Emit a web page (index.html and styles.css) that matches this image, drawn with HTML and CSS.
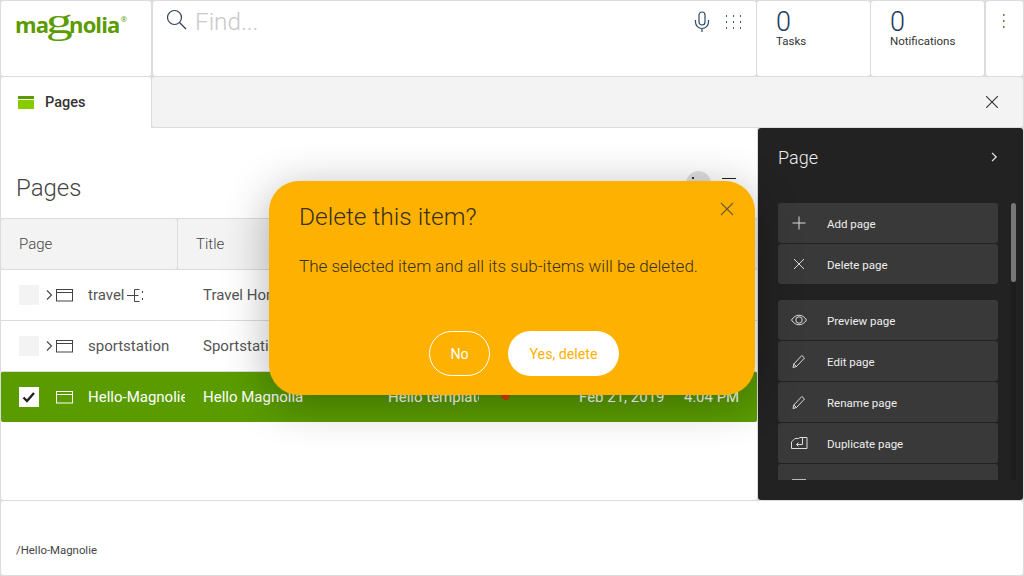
FILE: index.html
```html
<!DOCTYPE html>
<html lang="en">
<head>
  <meta charset="UTF-8">
  <title>Magnolia - Pages</title>
  <link rel="stylesheet" href="styles.css">
</head>
<body>

  <header class="topbar">
    <div class="card logo-card">
      <span class="logo">ma<span class="logo-g">g</span>nolia<sup class="logo-reg">®</sup></span>
    </div>
    <div class="card search-card">
      <svg class="search-icon" width="22" height="22" viewBox="0 0 22 22" fill="none" stroke="#2f4057" stroke-width="1.2"><circle cx="8.5" cy="8.5" r="7"/><path d="M13.5 13.5l6.5 6.5"/></svg>
      <span class="search-text">Find...</span>
      <svg class="mic-icon" width="16" height="22" viewBox="0 0 16 22" fill="none" stroke="#2f4a63" stroke-width="1.2"><rect x="5" y="1" width="6" height="13" rx="3"/><path d="M1.5 9v2a6.500 6.500 0 0 0 13 0V9M8 17.500V21"/></svg>
      <svg class="apps-icon" width="18" height="16" viewBox="0 0 18 16" fill="#46586c"><rect x="1" y="1" width="1" height="2"/><rect x="8" y="1" width="1" height="2"/><rect x="15" y="1" width="1" height="2"/><rect x="1" y="7" width="1" height="2"/><rect x="8" y="7" width="1" height="2"/><rect x="15" y="7" width="1" height="2"/><rect x="1" y="13" width="1" height="2"/><rect x="8" y="13" width="1" height="2"/><rect x="15" y="13" width="1" height="2"/></svg>
    </div>
    <div class="card counter-card tasks-card">
      <span class="counter-num">0</span>
      <span class="counter-label">Tasks</span>
    </div>
    <div class="card counter-card notif-card">
      <span class="counter-num">0</span>
      <span class="counter-label">Notifications</span>
    </div>
    <div class="card more-card">
      <svg width="3" height="15" viewBox="0 0 3 15" fill="#8a6a3c"><rect x="1" y="0" width="1.500" height="2"/><rect x="1" y="6" width="1.500" height="2"/><rect x="1" y="12" width="1.500" height="2"/></svg>
    </div>
  </header>

  <nav class="tabbar">
    <div class="tab">
      <span class="tab-icon"></span>
      <span class="tab-label">Pages</span>
    </div>
    <div class="tab-rest">
      <svg width="12" height="12" viewBox="0 0 12 12" stroke="#333" stroke-width="1.100"><path d="M0 0l12 12M12 0L0 12"/></svg>
    </div>
  </nav>

  <main class="workspace">
    <section class="content">
      <div class="content-head">
        <h1 class="content-title">Pages</h1>
        <div class="view-tools">
          <span class="view-round"></span>
          <span class="view-lines"></span>
        </div>
      </div>

      <div class="grid-head">
        <div class="head-cell head-page">Page</div>
        <div class="head-cell head-title">Title</div>
      </div>

      <div class="grid-row">
        <span class="check"></span>
        <svg class="chev" width="7" height="12" viewBox="0 0 7 12" fill="none" stroke="#444" stroke-width="1.100"><path d="M1 1.500L5.500 6 1 10.500"/></svg>
        <svg class="page-icon" width="18" height="13" viewBox="0 0 18 13" fill="none" stroke="#444"><rect x=".5" y=".5" width="16" height="11.500"/><path d="M.5 3.500h16"/></svg>
        <span class="cell cell-name">travel<svg class="drop-mark" width="18" height="15" viewBox="0 0 18 15" fill="none" stroke="#444"><path d="M0 7.500h9M7.500 1.500v12M7.500 1.500h5M7.500 13.500h5M7.500 7.500h4M15.500 3v2M15.500 10v2"/></svg></span>
        <span class="cell cell-title">Travel Home</span>
      </div>
      <div class="grid-row">
        <span class="check"></span>
        <svg class="chev" width="7" height="12" viewBox="0 0 7 12" fill="none" stroke="#444" stroke-width="1.100"><path d="M1 1.500L5.500 6 1 10.500"/></svg>
        <svg class="page-icon" width="18" height="13" viewBox="0 0 18 13" fill="none" stroke="#444"><rect x=".5" y=".5" width="16" height="11.500"/><path d="M.5 3.500h16"/></svg>
        <span class="cell cell-name">sportstation</span>
        <span class="cell cell-title">Sportstation</span>
      </div>
      <div class="grid-row is-selected">
        <span class="check">
          <svg width="14" height="12" viewBox="0 0 14 12" fill="none" stroke="#222" stroke-width="2.400"><path d="M1.500 6.500l3.500 3.500 7-8"/></svg>
        </span>
        <span class="chev-gap"></span>
        <svg class="page-icon" width="18" height="13" viewBox="0 0 18 13" fill="none" stroke="#fff"><rect x=".5" y=".5" width="16" height="11.500"/><path d="M.5 3.500h16"/></svg>
        <span class="cell cell-name">Hello-Magnolie</span>
        <span class="cell cell-title">Hello Magnolia</span>
        <span class="cell cell-template">Hello template</span>
        <span class="status-dot"></span>
        <span class="cell cell-date">Feb 21, 2019</span>
        <span class="cell cell-time">4:04 PM</span>
      </div>
    </section>

    <aside class="actions">
      <div class="actions-head">
        <span class="actions-title">Page</span>
        <svg width="7" height="10" viewBox="0 0 7 10" fill="none" stroke="#eee" stroke-width="1.200"><path d="M1 .8L5.200 5 1 9.200"/></svg>
      </div>
      <div class="actions-body">
        <div class="actions-list">
          <div class="action-group">
            <div class="action">
              <svg class="action-icon" width="24" height="16" viewBox="0 0 24 16" fill="none" stroke="#ddd"><path d="M12 1.500v13M5.500 8h13"/></svg>
              <span class="action-label">Add page</span>
            </div>
            <div class="action">
              <svg class="action-icon" width="24" height="16" viewBox="0 0 24 16" fill="none" stroke="#ddd"><path d="M7 3l10 10M17 3L7 13"/></svg>
              <span class="action-label">Delete page</span>
            </div>
          </div>
          <div class="action-group">
            <div class="action">
              <svg class="action-icon" width="24" height="16" viewBox="0 0 24 16" fill="none" stroke="#ddd"><path d="M4.500 8c2-3 4.500-4.800 7.500-4.800s5.500 1.800 7.500 4.800c-2 3-4.500 4.800-7.500 4.800S6.500 11 4.500 8z"/><circle cx="12" cy="8" r="3.200"/></svg>
              <span class="action-label">Preview page</span>
            </div>
            <div class="action">
              <svg class="action-icon" width="24" height="16" viewBox="0 0 24 16" fill="none" stroke="#ddd"><path d="M6 14.500l.8-3.500 8-8.500 2.700 2.500-8 8.500zM6.800 11l2.700 2.500"/></svg>
              <span class="action-label">Edit page</span>
            </div>
            <div class="action">
              <svg class="action-icon" width="24" height="16" viewBox="0 0 24 16" fill="none" stroke="#ddd"><path d="M6 14.500l.8-3.500 8-8.500 2.700 2.500-8 8.500zM6.800 11l2.700 2.500"/></svg>
              <span class="action-label">Rename page</span>
            </div>
            <div class="action">
              <svg class="action-icon" width="24" height="16" viewBox="0 0 24 16" fill="none" stroke="#ddd"><path d="M4.500 13.500V7l3.500-3.500h3.500l1.500-1h7v11zM15.500 3v6.500h-6M11.500 7.500l-2 2 2 2"/></svg>
              <span class="action-label">Duplicate page</span>
            </div>
            <div class="action action-peek">
              <svg class="action-icon" width="24" height="16" viewBox="0 0 24 16" fill="none" stroke="#bbb"><rect x="5.500" y=".5" width="13" height="13"/></svg>
            </div>
          </div>
        </div>
        <div class="actions-scroll"><span class="actions-thumb"></span></div>
      </div>
    </aside>

    <div class="dialog">
      <svg class="dialog-close" width="14" height="14" viewBox="0 0 14 14" stroke="#6b5a2c" stroke-width="1.100"><path d="M1 1l12 12M13 1L1 13"/></svg>
      <h2 class="dialog-title">Delete this item?</h2>
      <p class="dialog-text">The selected item and all its sub-items will be deleted.</p>
      <div class="dialog-buttons">
        <button class="btn btn-no">No</button>
        <button class="btn btn-yes">Yes, delete</button>
      </div>
    </div>
  </main>

  <footer class="pathbar">/Hello-Magnolie</footer>

</body>
</html>
```

FILE: styles.css
```css
html, body {
  margin: 0;
  height: 100%;
}
body {
  width: 1024px;
  height: 576px;
  box-sizing: border-box;
  padding: 1px;
  overflow: hidden;
  display: flex;
  flex-direction: column;
  background: #dcdcdc;
  font-family: Roboto, "Liberation Sans", sans-serif;
  color: #444;
}
.card {
  background: #fff;
  border-radius: 3px;
}

/* Top bar */
.topbar {
  display: flex;
  height: 75px;
  gap: 2px;
  flex: none;
}
.logo-card {
  width: 150px;
  box-sizing: border-box;
  padding: 7px 0 0 14px;
}
.logo {
  display: block;
  font-family: "Open Sans", sans-serif;
  font-weight: 700;
  font-size: 22px;
  line-height: 32px;
  letter-spacing: -0.9px;
  color: #5a9c00;
  white-space: nowrap;
}
.logo-g {
  display: inline-block;
  width: 21px;
  font-family: "Liberation Serif", serif;
  font-size: 36px;
  font-weight: 400;
  line-height: 20px;
  text-align: center;
  transform: scaleX(1.5);
}
.logo-reg {
  font-size: 8px;
  line-height: 0;
  font-weight: 400;
  vertical-align: 11px;
  margin-left: 1px;
}
.search-card {
  width: 603px;
  position: relative;
  display: flex;
  align-items: flex-start;
  box-sizing: border-box;
  padding: 8px 0 0 13px;
}
.search-icon {
  flex: none;
}
.search-text {
  margin-left: 7px;
  margin-top: -1px;
  font-size: 24.3px;
  font-weight: 300;
  line-height: 28px;
  color: #c9c9c9;
}
.mic-icon {
  margin-left: auto;
  margin-top: 2px;
}
.apps-icon {
  margin: 5px 13px 0 15px;
}
.counter-card {
  box-sizing: border-box;
  padding: 8px 0 0 19px;
  display: flex;
  flex-direction: column;
  margin-left: -1px;
}
.tasks-card {
  width: 113px;
}
.notif-card {
  width: 113px;
}
.counter-num {
  font-size: 27px;
  font-weight: 300;
  line-height: 26px;
  color: #223a5e;
}
.counter-label {
  font-size: 11.5px;
  line-height: 12px;
  color: #333;
}
.more-card {
  flex: 1;
  padding: 13px 0 0 16px;
}

/* Tabs */
.tabbar {
  display: flex;
  height: 51px;
  margin-top: 1px;
  flex: none;
}
.tab {
  width: 150px;
  height: 51px;
  display: flex;
  align-items: center;
  box-sizing: border-box;
  padding-left: 17px;
  background: #fff;
  border-radius: 3px 3px 0 0;
}
.tab-icon {
  width: 16px;
  height: 13px;
  box-sizing: border-box;
  border-top: 3px solid #5a9c00;
  background: #88cc00;
  box-shadow: inset 0 1px 0 #fff;
}
.tab-label {
  margin: 0 0 1px 11px;
  font-size: 14.5px;
  font-weight: 500;
  color: #333;
}
.tab-rest {
  flex: 1;
  height: 50px;
  margin-left: 1px;
  display: flex;
  align-items: center;
  justify-content: flex-end;
  padding-right: 25px;
  background: #f3f3f3;
  border-radius: 3px;
}

/* Workspace */
.workspace {
  position: relative;
  flex: 1;
  display: flex;
  gap: 1px;
  min-height: 0;
}
.content {
  width: 756px;
  background: #fff;
  border-radius: 0 0 3px 3px;
  height: 372px;
}
.content-head {
  height: 90px;
  display: flex;
  justify-content: space-between;
  box-sizing: border-box;
  padding: 44px 21px 0 15px;
  position: relative;
}
.content-title {
  margin: 0;
  font-size: 24px;
  font-weight: 300;
  line-height: 32px;
  color: #444;
}
.view-tools {
  display: flex;
  gap: 11px;
  margin-top: -1px;
}
.view-round {
  position: relative;
  width: 25px;
  height: 25px;
  border-radius: 50%;
  background: #e0e0e0;
}
.view-round::after {
  content: "";
  position: absolute;
  left: 6px;
  top: 6px;
  width: 2px;
  height: 2px;
  background: #333;
}
.view-lines {
  width: 14px;
  height: 8px;
  margin-top: 7px;
  border-top: 1px solid #222;
}
.grid-head {
  display: flex;
  height: 50px;
  gap: 1px;
  background: #dcdcdc;
  border-top: 1px solid #dcdcdc;
  box-sizing: content-box;
}
.head-cell {
  display: flex;
  align-items: center;
  box-sizing: border-box;
  background: #f3f3f3;
  font-size: 15px;
  font-weight: 300;
  color: #444;
  border-radius: 2px;
}
.head-page {
  width: 176px;
  padding-left: 18px;
}
.head-title {
  flex: 1;
  padding-left: 18px;
}
.grid-row {
  display: flex;
  align-items: center;
  height: 50px;
  border-top: 1px solid #dcdcdc;
  padding-left: 18px;
  font-size: 15px;
  color: #555;
}
.grid-row.is-selected {
  background: #5a9c00;
  color: #fff;
  border-radius: 2px;
}
.check {
  width: 20px;
  height: 20px;
  flex: none;
  display: flex;
  align-items: center;
  justify-content: center;
  background: #f3f3f3;
}
.is-selected .check {
  background: #fff;
}
.chev {
  margin-left: 7px;
  flex: none;
}
.chev-gap {
  width: 7px;
  margin-left: 7px;
  flex: none;
}
.page-icon {
  margin-left: 3px;
  flex: none;
}
.cell {
  white-space: nowrap;
  overflow: hidden;
  flex: none;
}
.cell-name {
  width: 97px;
  margin-left: 14px;
  display: flex;
  align-items: center;
}
.drop-mark {
  flex: none;
  margin-left: 2px;
}
.cell-title {
  width: 185px;
  margin-left: 18px;
}
.cell-template {
  width: 91px;
}
.status-dot {
  width: 9px;
  height: 9px;
  margin: 0 0 4px 22px;
  border-radius: 50%;
  background: #d6400a;
  flex: none;
}
.cell-date {
  width: 105px;
  margin-left: 69px;
}
.cell-time {
  width: 60px;
}

/* Actions panel */
.actions {
  flex: 1;
  height: 372px;
  background: #222;
  border-radius: 3px;
  color: #eee;
}
.actions-head {
  display: flex;
  align-items: center;
  justify-content: space-between;
  height: 60px;
  box-sizing: border-box;
  padding: 0 25px 2px 20px;
}
.actions-title {
  font-size: 18px;
  font-weight: 300;
}
.actions-body {
  display: flex;
  height: 277px;
  margin-top: 15px;
  padding-left: 20px;
}
.actions-list {
  width: 220px;
  overflow: hidden;
}
.action-group {
  margin-bottom: 16px;
}
.action {
  display: flex;
  align-items: center;
  height: 40px;
  margin-bottom: 1px;
  background: #393939;
  border-radius: 3px;
  font-size: 11.5px;
  color: #eee;
}
.action-label {
  padding-top: 2px;
}
.action-icon {
  margin: 0 16px 0 9px;
  flex: none;
}
.action-peek .action-icon {
  margin-top: 6px;
}
.actions-scroll {
  width: 5px;
  margin-left: 13px;
  background: #1d1d1d;
  border-radius: 3px;
}
.actions-thumb {
  display: block;
  height: 79px;
  background: #777;
  border-radius: 3px;
}

/* Confirm dialog */
.dialog {
  position: absolute;
  left: 268px;
  top: 53px;
  width: 486px;
  height: 214px;
  box-sizing: border-box;
  padding: 21px 30px 0;
  background: #ffb100;
  border-radius: 30px;
  box-shadow: 0 8px 45px rgba(0, 0, 0, 0.3);
  color: #37301c;
}
.dialog-close {
  position: absolute;
  right: 21px;
  top: 21px;
}
.dialog-title {
  margin: 0;
  font-size: 24.5px;
  font-weight: 300;
  line-height: 30px;
}
.dialog-text {
  margin: 22px 0 0;
  font-size: 17px;
  font-weight: 300;
  line-height: 24px;
}
.dialog-buttons {
  display: flex;
  gap: 18px;
  margin-top: 53px;
  padding-left: 130px;
}
.btn {
  height: 45px;
  padding: 1px 0 0;
  border-radius: 23px;
  font-family: Roboto, sans-serif;
  font-size: 14.2px;
  cursor: pointer;
}
.btn-no {
  width: 61px;
  border: 1px solid #fff;
  background: transparent;
  color: #fff;
}
.btn-yes {
  width: 111px;
  border: 0;
  background: #fff;
  color: #ffb100;
}

/* Path */
.pathbar {
  height: 74px;
  margin-top: 1px;
  flex: none;
  box-sizing: border-box;
  padding: 42px 0 0 15px;
  background: #fff;
  border-radius: 3px;
  font-size: 11.4px;
  line-height: 14px;
  color: #444;
}
```
